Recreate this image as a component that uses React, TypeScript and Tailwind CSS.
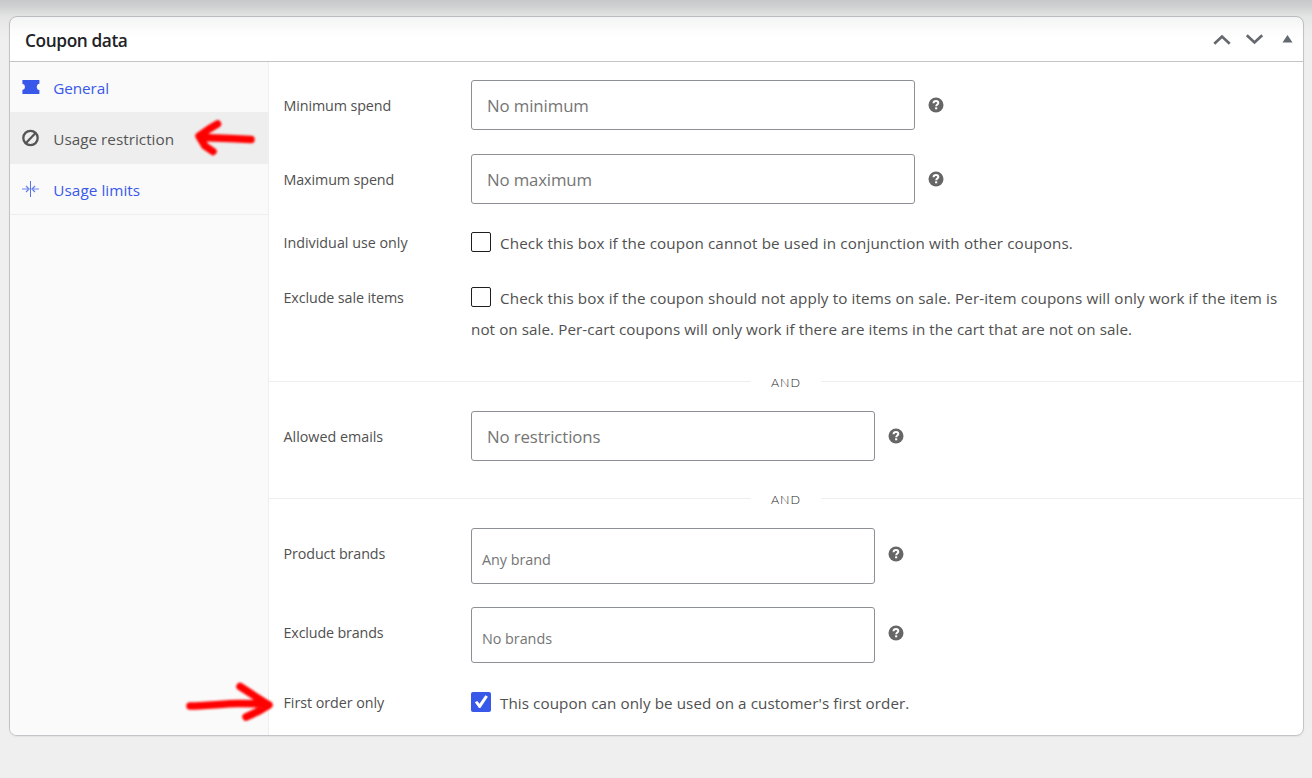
import React from "react";

function Help({ className = "" }: { className?: string }) {
  return (
    <svg className={"ml-[13px] size-4 shrink-0 " + className} viewBox="0 0 16 16">
      <circle cx="8" cy="8" r="7.5" fill="#666" />
      <path d="M5.5 6.2C5.6 4.7 6.6 4 8 4s2.3.8 2.3 1.9c0 1.6-2.1 1.6-2.1 3.3" fill="none" stroke="#fff" strokeWidth="2" />
      <rect x="7.1" y="10.3" width="2.1" height="2" fill="#fff" />
    </svg>
  );
}

function Label({ children, className = "" }: { children: React.ReactNode; className?: string }) {
  return <div className={"w-[187.5px] shrink-0 whitespace-nowrap text-[14.3px] " + className}>{children}</div>;
}

function Field({ label, text, labelClass, helpClass, box, inner }: { label: string; text: string; labelClass: string; helpClass?: string; box: string; inner: string }) {
  return (
    <div className="flex items-center">
      <Label className={labelClass}>{label}</Label>
      <div className={"flex shrink-0 items-center rounded-[3px] border border-[#8c8f94] bg-white text-[#757575] " + box}>
        <span className={inner}>{text}</span>
      </div>
      <Help className={helpClass} />
    </div>
  );
}

function Check({ on = false }: { on?: boolean }) {
  return on ? (
    <span className="mr-[9px] inline-flex size-5 items-center justify-center rounded-[2px] bg-[#3858e9] align-[-4px]">
      <svg className="size-5" viewBox="0 0 20 20">
        <path d="M3.8 10.3L6.3 9L8.5 11.7L14.4 3.3L16.9 4.8L9.4 15.9H8Z" fill="#fff" />
      </svg>
    </span>
  ) : (
    <span className="mr-[9px] inline-block size-5 rounded-[2px] border border-[#1e1e1e] bg-white align-[-4px]" />
  );
}

function And() {
  return (
    <div className="flex h-5 items-center">
      <div className="h-px w-[482px] bg-[#eee]" />
      <div className="w-[70px] pt-[3px] text-center font-['Lato'] text-[12.5px] font-light leading-5 tracking-[1px] text-[#1d2327]">AND</div>
      <div className="h-px flex-1 bg-[#eee]" />
    </div>
  );
}

export default function App() {
  return (
    <div className="relative h-[778px] w-[1312px] overflow-hidden bg-[#efefef] px-[9px] pt-4 pr-2 font-['Open_Sans','Noto_Sans',sans-serif] text-[#505050]">
      <div className="flex h-[720px] flex-col overflow-hidden rounded-lg border border-[#c3c4c7] bg-white shadow-[0_1px_2px_rgba(0,0,0,0.06)]">
        <header className="flex h-[45px] shrink-0 items-center border-b border-[#c3c4c7] pl-[15px]">
          <h2 className="flex-1 pt-[3px] text-[17.3px] font-semibold tracking-[-0.4px] text-[#1d2327]">Coupon data</h2>
          <svg className="h-5 w-[90px]" viewBox="1213 29 90 20" fill="none" stroke="#646970" strokeWidth="2.7">
            <path d="M1214.3 43.7l7.7-7.2 7.7 7.2M1246.8 35.3l7.7 7.2 7.7-7.2" />
            <path d="M1282.5 42.5l5-7.5 5 7.5z" fill="#646970" stroke="none" />
          </svg>
        </header>
        <div className="flex flex-1">
          <nav className="w-[259px] shrink-0 border-r border-[#eee] bg-[#fafafa] text-[15.3px] text-[#3858e9]">
            <div className="flex h-[50px] items-center pl-3">
              <svg className="mr-[13.3px] size-[18px]" viewBox="0 0 18 18">
                <path d="M.4 2h17v3.8q-2.6.4-2.6 3.1t2.6 3.1v4H.4v-4q2.6-.4 2.6-3.1T.4 5.8z" fill="#3858e9" />
              </svg>
              <span className="pt-[2px] tracking-[-0.1px]">General</span>
            </div>
            <div className="flex h-[52px] items-center bg-[#eee] pl-3 text-[#555]">
              <svg className="mr-[13.3px] size-[18px]" viewBox="0 0 18 18" fill="none" stroke="#555" strokeWidth="2.3">
                <circle cx="8.5" cy="9" r="7.2" />
                <path d="M4 14L13.3 4.2" />
              </svg>
              <span className="pt-[2px]">Usage restriction</span>
            </div>
            <div className="flex h-[51px] items-center border-b border-[#eee] pl-3">
              <svg className="mr-[13.3px] size-[18px]" viewBox="0 0 18 18" fill="none" stroke="#3858e9" strokeWidth="1">
                <path d="M8.5 1v16" strokeOpacity="0.85" />
                <path d="M0 9h6M17 9h-6" strokeOpacity="0.75" />
                <path d="M4 6L7 9 4 12M13 6L10 9l3 3" strokeWidth="1.3" strokeOpacity="0.75" />
              </svg>
              <span className="pt-[2px] tracking-[0.05px]">Usage limits</span>
            </div>
          </nav>
          <main className="flex-1 pt-[18px]">
            <div className="pl-[14.5px]">
              <Field label="Minimum spend" text="No minimum" labelClass="pt-[2px] tracking-[-0.1px]" box="h-[50px] w-[444px] pl-[15px]" inner="pt-[2px] text-[16.8px] tracking-[-0.1px]" />
              <div className="h-6" />
              <Field label="Maximum spend" text="No maximum" labelClass="pt-[2px] tracking-[-0.1px]" box="h-[50px] w-[444px] pl-[15px]" inner="pt-[2px] text-[16.8px] tracking-[-0.15px]" />
              <div className="mt-[23px] flex leading-[31px]">
                <Label>Individual use only</Label>
                <div className="text-[15.2px] tracking-[0.13px]"><Check /><span className="relative top-px">Check this box if the coupon cannot be used in conjunction with other coupons.</span></div>
              </div>
              <div className="mt-6 flex leading-[31px]">
                <Label className="tracking-[-0.1px]">Exclude sale items</Label>
                <div className="whitespace-nowrap text-[15.2px] tracking-[0.135px]">
                  <Check /><span className="relative top-px">Check this box if the coupon should not apply to items on sale. Per-item coupons will only work if the item is<br />
                  <span className="tracking-[0.08px]">not on sale. Per-cart coupons will only work if there are items in the cart that are not on sale.</span></span>
                </div>
              </div>
            </div>
            <div className="mt-[27px] mb-5"><And /></div>
            <div className="pl-[14.5px]">
              <Field label="Allowed emails" text="No restrictions" labelClass="pt-[2px]" box="h-[50px] w-[404px] pl-[15px]" inner="pt-[2px] text-[16.8px] tracking-[-0.12px]" />
            </div>
            <div className="mt-[27px] mb-5"><And /></div>
            <div className="pl-[14.5px]">
              <Field label="Product brands" text="Any brand" labelClass="pb-1 tracking-[-0.1px]" helpClass="mb-[5px]" box="h-14 w-[404px] pl-[10px]" inner="pt-2 text-[14.4px] tracking-[-0.05px]" />
              <div className="h-[23px]" />
              <Field label="Exclude brands" text="No brands" labelClass="pb-1 tracking-[-0.15px]" helpClass="mb-[5px]" box="h-14 w-[404px] pl-[10px]" inner="pt-2 text-[14.4px] tracking-[-0.05px]" />
              <div className="mt-6 flex leading-[31px]">
                <Label className="tracking-[-0.05px]">First order only</Label>
                <div className="text-[15.2px] tracking-[0.085px]"><Check on /><span className="relative top-px">This coupon can only be used on a customer's first order.</span></div>
              </div>
            </div>
          </main>
        </div>
      </div>
      <div className="pointer-events-none absolute inset-x-0 top-0 h-10 bg-[linear-gradient(to_bottom,rgba(60,65,70,0.22),rgba(60,65,70,0.18)_15%,rgba(60,65,70,0.06)_42%,rgba(60,65,70,0.015)_75%,transparent)]" />
      <svg className="pointer-events-none absolute inset-0 h-full w-full" fill="none" stroke="#f00" strokeWidth="7.5" strokeLinecap="round" strokeLinejoin="round">
        <g style={{ filter: "blur(0.9px)" }}>
          <path d="M217.5 124L209 129L199 136L205 146L213 151.5M201 137.5L230 138.5L251 139.5" />
          <path d="M190 706C205 706 225 703.5 238 703.5L267 704L240 686.5M269 705L259 711L246 717" />
        </g>
      </svg>
    </div>
  );
}
